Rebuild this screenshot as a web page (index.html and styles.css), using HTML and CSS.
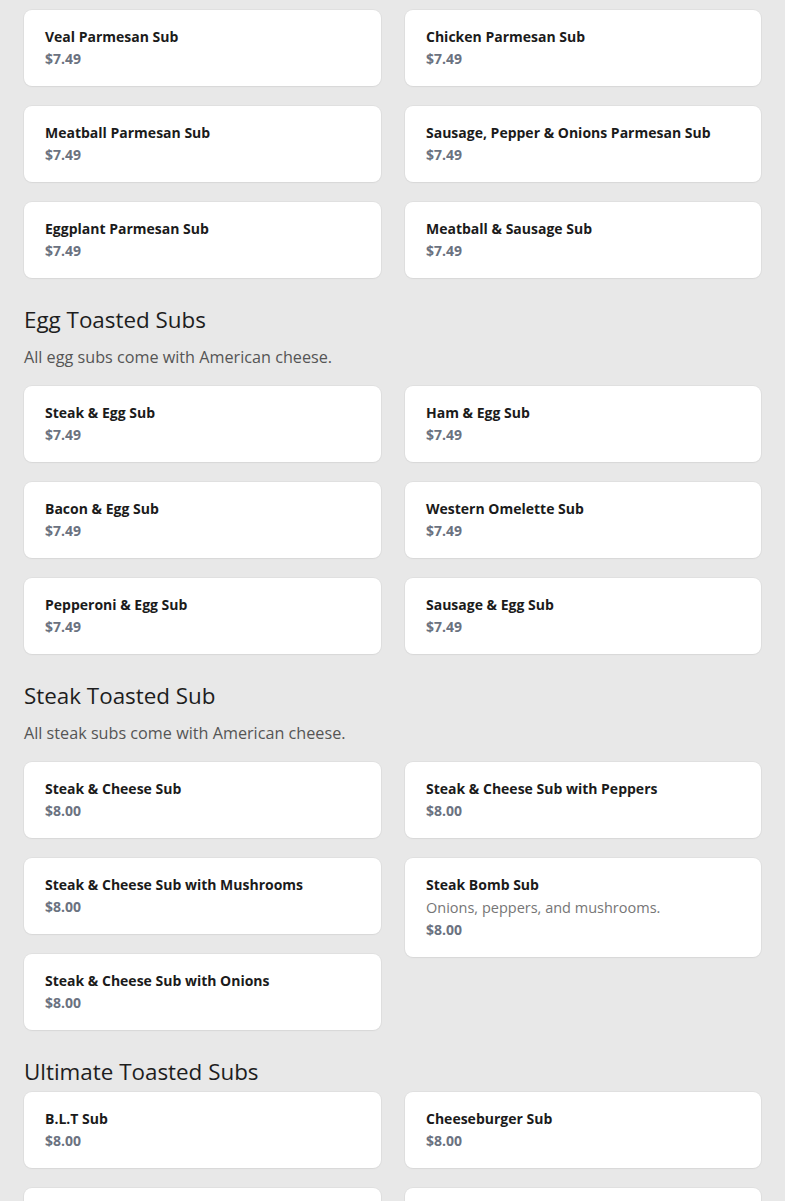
FILE: index.html
```html
<!DOCTYPE html>
<html>
<head>
<meta charset="utf-8">
<link rel="stylesheet" href="styles.css">
</head>
<body>
<main class="menu">
  <section class="section first">
    <div class="grid">
      <div class="col">
        <div class="card"><div class="name">Veal Parmesan Sub</div><div class="price">$7.49</div></div>
        <div class="card"><div class="name">Meatball Parmesan Sub</div><div class="price">$7.49</div></div>
        <div class="card"><div class="name">Eggplant Parmesan Sub</div><div class="price">$7.49</div></div>
      </div>
      <div class="col">
        <div class="card"><div class="name">Chicken Parmesan Sub</div><div class="price">$7.49</div></div>
        <div class="card"><div class="name">Sausage, Pepper &amp; Onions Parmesan Sub</div><div class="price">$7.49</div></div>
        <div class="card"><div class="name">Meatball &amp; Sausage Sub</div><div class="price">$7.49</div></div>
      </div>
    </div>
  </section>
  <section class="section">
    <h2 class="section-title">Egg Toasted Subs</h2>
    <p class="section-desc">All egg subs come with American cheese.</p>
    <div class="grid">
      <div class="col">
        <div class="card"><div class="name">Steak &amp; Egg Sub</div><div class="price">$7.49</div></div>
        <div class="card"><div class="name">Bacon &amp; Egg Sub</div><div class="price">$7.49</div></div>
        <div class="card"><div class="name">Pepperoni &amp; Egg Sub</div><div class="price">$7.49</div></div>
      </div>
      <div class="col">
        <div class="card"><div class="name">Ham &amp; Egg Sub</div><div class="price">$7.49</div></div>
        <div class="card"><div class="name">Western Omelette Sub</div><div class="price">$7.49</div></div>
        <div class="card"><div class="name">Sausage &amp; Egg Sub</div><div class="price">$7.49</div></div>
      </div>
    </div>
  </section>
  <section class="section">
    <h2 class="section-title">Steak Toasted Sub</h2>
    <p class="section-desc">All steak subs come with American cheese.</p>
    <div class="grid">
      <div class="col">
        <div class="card"><div class="name">Steak &amp; Cheese Sub</div><div class="price">$8.00</div></div>
        <div class="card"><div class="name">Steak &amp; Cheese Sub with Mushrooms</div><div class="price">$8.00</div></div>
        <div class="card"><div class="name">Steak &amp; Cheese Sub with Onions</div><div class="price">$8.00</div></div>
      </div>
      <div class="col">
        <div class="card"><div class="name">Steak &amp; Cheese Sub with Peppers</div><div class="price">$8.00</div></div>
        <div class="card"><div class="name">Steak Bomb Sub</div><div class="desc">Onions, peppers, and mushrooms.</div><div class="price">$8.00</div></div>
      </div>
    </div>
  </section>
  <section class="section">
    <h2 class="section-title">Ultimate Toasted Subs</h2>
    <div class="grid">
      <div class="col">
        <div class="card"><div class="name">B.L.T Sub</div><div class="price">$8.00</div></div>
        <div class="card"><div class="name">Italian Sub</div><div class="price">$8.00</div></div>
      </div>
      <div class="col">
        <div class="card"><div class="name">Cheeseburger Sub</div><div class="price">$8.00</div></div>
        <div class="card"><div class="name">Ham Sub</div><div class="price">$8.00</div></div>
      </div>
    </div>
  </section>
</main>
</body>
</html>
```
FILE: styles.css
```css
html, body {
  margin: 0;
  padding: 0;
  background: #e8e8e8;
}
body {
  font-family: "Open Sans", "Liberation Sans", sans-serif;
  color: #1b1b1b;
}
.menu {
  padding: 10px 24px 24px;
  display: flex;
  flex-direction: column;
}
.section {
  display: flex;
  flex-direction: column;
  margin-top: 28px;
}
.section.first {
  margin-top: 0;
}
.section-title {
  margin: 0 0 6px;
  font-size: 22.4px;
  line-height: 28px;
  font-weight: 400;
  color: #1e1e1e;
}
.section-desc {
  margin: 5px 0 17px;
  font-size: 16.2px;
  line-height: 24px;
  color: #555;
}
.grid {
  display: grid;
  grid-template-columns: 357px 356px;
  column-gap: 24px;
  align-items: start;
}
.col {
  display: flex;
  flex-direction: column;
  gap: 20px;
}
.card {
  background: #fff;
  border-radius: 8px;
  box-shadow: 0 0 0 1px rgba(0,0,0,0.03), 0 1px 2px rgba(0,0,0,0.04);
  padding: 16px 21px 16px;
}
.name {
  font-size: 14px;
  line-height: 22px;
  font-weight: 700;
  color: #1b1b1b;
}
.desc {
  font-size: 14.5px;
  line-height: 23px;
  color: #767676;
}
.price {
  font-size: 14px;
  line-height: 22px;
  font-weight: 700;
  color: #6b7280;
}
```
